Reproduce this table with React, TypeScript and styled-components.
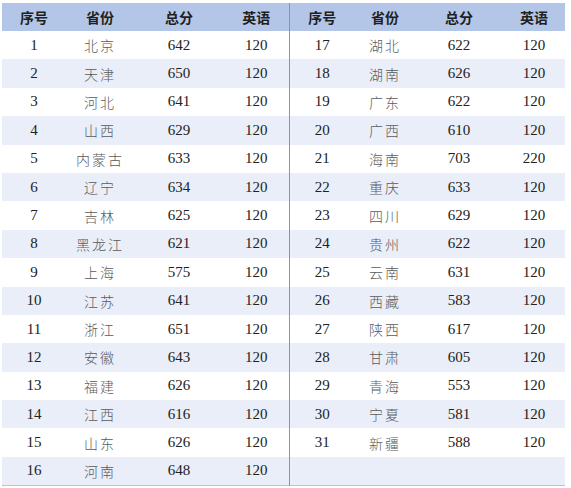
import styled, { createGlobalStyle } from 'styled-components';

const rows: [number, string, number, number][] = [
  [1, '北京', 642, 120],
  [2, '天津', 650, 120],
  [3, '河北', 641, 120],
  [4, '山西', 629, 120],
  [5, '内蒙古', 633, 120],
  [6, '辽宁', 634, 120],
  [7, '吉林', 625, 120],
  [8, '黑龙江', 621, 120],
  [9, '上海', 575, 120],
  [10, '江苏', 641, 120],
  [11, '浙江', 651, 120],
  [12, '安徽', 643, 120],
  [13, '福建', 626, 120],
  [14, '江西', 616, 120],
  [15, '山东', 626, 120],
  [16, '河南', 648, 120],
  [17, '湖北', 622, 120],
  [18, '湖南', 626, 120],
  [19, '广东', 622, 120],
  [20, '广西', 610, 120],
  [21, '海南', 703, 220],
  [22, '重庆', 633, 120],
  [23, '四川', 629, 120],
  [24, '贵州', 622, 120],
  [25, '云南', 631, 120],
  [26, '西藏', 583, 120],
  [27, '陕西', 617, 120],
  [28, '甘肃', 605, 120],
  [29, '青海', 553, 120],
  [30, '宁夏', 581, 120],
  [31, '新疆', 588, 120],
];

const GlobalStyle = createGlobalStyle`
  html, body {
    margin: 0;
    padding: 0;
    background: #ffffff;
  }
`;

const Page = styled.div`
  padding: 3px 0 0 2px;
`;

const Table = styled.table`
  border-collapse: collapse;
  table-layout: fixed;
  width: 563px;
  border-bottom: 1px solid #b4c6e7;
`;

const Col = styled.col<{ $w: number }>`
  width: ${(p) => p.$w}px;
`;

const Head = styled.th<{ $split?: boolean }>`
  height: 28px;
  padding: 0;
  background: #b4c6e7;
  font-family: 'Noto Sans CJK SC', sans-serif;
  font-weight: 700;
  font-size: 14px;
  color: #1f1f1f;
  text-align: center;
  border-left: ${(p) => (p.$split ? '1px solid #8497b0' : 'none')};
`;

const Row = styled.tr<{ $alt: boolean }>`
  height: 28.4px;
  background: ${(p) => (p.$alt ? '#e9eef8' : '#ffffff')};
`;

const Num = styled.td<{ $split?: boolean }>`
  padding: 0;
  text-align: center;
  font-family: 'Liberation Serif', 'Times New Roman', 'DejaVu Serif', serif;
  font-size: 15px;
  color: #222222;
  border-left: ${(p) => (p.$split ? '1px solid #8497b0' : 'none')};
`;

const Name = styled.td`
  padding: 0;
  text-align: center;
  font-family: 'Noto Sans CJK SC', sans-serif;
  font-size: 14px;
  font-weight: 300;
  letter-spacing: 2px;
  color: #5a5a5a;
`;

const headers = ['序号', '省份', '总分', '英语'];
const widths = [64, 68, 90, 65, 66, 60, 88, 62];

const App = () => {
  const left = rows.slice(0, 16);
  const right = rows.slice(16);
  return (
    <Page>
      <GlobalStyle />
      <Table>
        <colgroup>
          {widths.map((w, i) => (
            <Col key={i} $w={w} />
          ))}
        </colgroup>
        <thead>
          <tr>
            {headers.map((h) => (
              <Head key={'l' + h}>{h}</Head>
            ))}
            {headers.map((h, i) => (
              <Head key={'r' + h} $split={i === 0}>
                {h}
              </Head>
            ))}
          </tr>
        </thead>
        <tbody>
          {left.map((l, i) => {
            const r = right[i];
            return (
              <Row key={l[0]} $alt={i % 2 === 1}>
                <Num>{l[0]}</Num>
                <Name>{l[1]}</Name>
                <Num>{l[2]}</Num>
                <Num>{l[3]}</Num>
                <Num $split>{r ? r[0] : ''}</Num>
                <Name>{r ? r[1] : ''}</Name>
                <Num>{r ? r[2] : ''}</Num>
                <Num>{r ? r[3] : ''}</Num>
              </Row>
            );
          })}
        </tbody>
      </Table>
    </Page>
  );
};

export default App;
